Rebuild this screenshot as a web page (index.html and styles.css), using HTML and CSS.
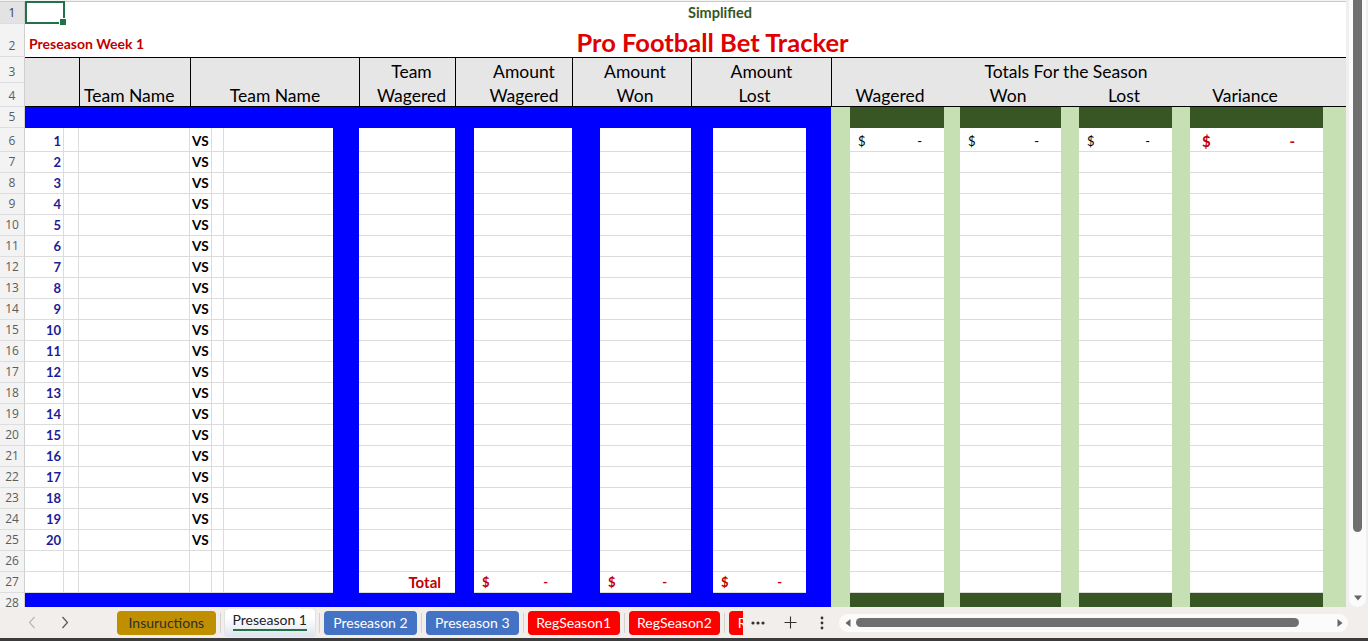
FILE: index.html
```html
<!DOCTYPE html>
<html lang="en">
<head>
<meta charset="utf-8">
<title>Pro Football Bet Tracker</title>
<link rel="stylesheet" href="styles.css">
</head>
<body>
<div class="app">
  <div class="sheet">
    <div class="colhead"></div>

    <div class="row r1">
      <span class="rh rh-sel">1</span>
      <span class="a1"></span>
      <span class="subtitle">Simplified</span>
    </div>

    <div class="row r2">
      <span class="rh">2</span>
      <span class="week">Preseason Week 1</span>
      <span class="title">Pro Football Bet Tracker</span>
    </div>

    <div class="row hdr">
      <span class="rh h3">3</span>
      <span class="rh h4">4</span>
      <div class="hc hc-ab"><span></span><span></span></div>
      <div class="hc hc-c"><span></span><span>Team Name</span></div>
      <div class="hc hc-dg"><span></span><span>Team Name</span></div>
      <div class="hc hc-h"><span>Team</span><span>Wagered</span></div>
      <div class="hc hc-ij"><span>Amount</span><span>Wagered</span></div>
      <div class="hc hc-kl"><span>Amount</span><span>Won</span></div>
      <div class="hc hc-mo"><span>Amount</span><span class="lost">Lost</span></div>
      <div class="hc hc-tot">
        <span class="tot-title">Totals For the Season</span>
        <span class="tot-sub"><em>Wagered</em><em>Won</em><em>Lost</em><em>Variance</em><em></em></span>
      </div>
    </div>

    <div class="row band">
      <span class="rh">5</span><span class="blueband"></span>
      <span class="l"></span><span class="dg"></span><span class="l"></span><span class="dg"></span><span class="l"></span><span class="dg"></span><span class="l"></span><span class="dg"></span><span class="l"></span>
    </div>

    <div class="row d first"><span class="rh">6</span><span class="gv n">1</span><span class="gv"></span><span class="gv"></span><span class="gv vs">VS</span><span class="gv"></span><span class="g"></span><span class="b"></span><span class="g"></span><span class="b"></span><span class="g"></span><span class="b"></span><span class="g"></span><span class="b"></span><span class="g"></span><span class="b"></span><span class="l"></span><span class="g acct"><span>$</span><span>-</span></span><span class="l"></span><span class="g acct"><span>$</span><span>-</span></span><span class="l"></span><span class="g acct"><span>$</span><span>-</span></span><span class="l"></span><span class="g acct var"><span>$</span><span>-</span></span><span class="l"></span></div>
    <div class="row d"><span class="rh">7</span><span class="gv n">2</span><span class="gv"></span><span class="gv"></span><span class="gv vs">VS</span><span class="gv"></span><span class="g"></span><span class="b"></span><span class="g"></span><span class="b"></span><span class="g"></span><span class="b"></span><span class="g"></span><span class="b"></span><span class="g"></span><span class="b"></span><span class="l"></span><span class="g"></span><span class="l"></span><span class="g"></span><span class="l"></span><span class="g"></span><span class="l"></span><span class="g"></span><span class="l"></span></div>
    <div class="row d"><span class="rh">8</span><span class="gv n">3</span><span class="gv"></span><span class="gv"></span><span class="gv vs">VS</span><span class="gv"></span><span class="g"></span><span class="b"></span><span class="g"></span><span class="b"></span><span class="g"></span><span class="b"></span><span class="g"></span><span class="b"></span><span class="g"></span><span class="b"></span><span class="l"></span><span class="g"></span><span class="l"></span><span class="g"></span><span class="l"></span><span class="g"></span><span class="l"></span><span class="g"></span><span class="l"></span></div>
    <div class="row d"><span class="rh">9</span><span class="gv n">4</span><span class="gv"></span><span class="gv"></span><span class="gv vs">VS</span><span class="gv"></span><span class="g"></span><span class="b"></span><span class="g"></span><span class="b"></span><span class="g"></span><span class="b"></span><span class="g"></span><span class="b"></span><span class="g"></span><span class="b"></span><span class="l"></span><span class="g"></span><span class="l"></span><span class="g"></span><span class="l"></span><span class="g"></span><span class="l"></span><span class="g"></span><span class="l"></span></div>
    <div class="row d"><span class="rh">10</span><span class="gv n">5</span><span class="gv"></span><span class="gv"></span><span class="gv vs">VS</span><span class="gv"></span><span class="g"></span><span class="b"></span><span class="g"></span><span class="b"></span><span class="g"></span><span class="b"></span><span class="g"></span><span class="b"></span><span class="g"></span><span class="b"></span><span class="l"></span><span class="g"></span><span class="l"></span><span class="g"></span><span class="l"></span><span class="g"></span><span class="l"></span><span class="g"></span><span class="l"></span></div>
    <div class="row d"><span class="rh">11</span><span class="gv n">6</span><span class="gv"></span><span class="gv"></span><span class="gv vs">VS</span><span class="gv"></span><span class="g"></span><span class="b"></span><span class="g"></span><span class="b"></span><span class="g"></span><span class="b"></span><span class="g"></span><span class="b"></span><span class="g"></span><span class="b"></span><span class="l"></span><span class="g"></span><span class="l"></span><span class="g"></span><span class="l"></span><span class="g"></span><span class="l"></span><span class="g"></span><span class="l"></span></div>
    <div class="row d"><span class="rh">12</span><span class="gv n">7</span><span class="gv"></span><span class="gv"></span><span class="gv vs">VS</span><span class="gv"></span><span class="g"></span><span class="b"></span><span class="g"></span><span class="b"></span><span class="g"></span><span class="b"></span><span class="g"></span><span class="b"></span><span class="g"></span><span class="b"></span><span class="l"></span><span class="g"></span><span class="l"></span><span class="g"></span><span class="l"></span><span class="g"></span><span class="l"></span><span class="g"></span><span class="l"></span></div>
    <div class="row d"><span class="rh">13</span><span class="gv n">8</span><span class="gv"></span><span class="gv"></span><span class="gv vs">VS</span><span class="gv"></span><span class="g"></span><span class="b"></span><span class="g"></span><span class="b"></span><span class="g"></span><span class="b"></span><span class="g"></span><span class="b"></span><span class="g"></span><span class="b"></span><span class="l"></span><span class="g"></span><span class="l"></span><span class="g"></span><span class="l"></span><span class="g"></span><span class="l"></span><span class="g"></span><span class="l"></span></div>
    <div class="row d"><span class="rh">14</span><span class="gv n">9</span><span class="gv"></span><span class="gv"></span><span class="gv vs">VS</span><span class="gv"></span><span class="g"></span><span class="b"></span><span class="g"></span><span class="b"></span><span class="g"></span><span class="b"></span><span class="g"></span><span class="b"></span><span class="g"></span><span class="b"></span><span class="l"></span><span class="g"></span><span class="l"></span><span class="g"></span><span class="l"></span><span class="g"></span><span class="l"></span><span class="g"></span><span class="l"></span></div>
    <div class="row d"><span class="rh">15</span><span class="gv n">10</span><span class="gv"></span><span class="gv"></span><span class="gv vs">VS</span><span class="gv"></span><span class="g"></span><span class="b"></span><span class="g"></span><span class="b"></span><span class="g"></span><span class="b"></span><span class="g"></span><span class="b"></span><span class="g"></span><span class="b"></span><span class="l"></span><span class="g"></span><span class="l"></span><span class="g"></span><span class="l"></span><span class="g"></span><span class="l"></span><span class="g"></span><span class="l"></span></div>
    <div class="row d"><span class="rh">16</span><span class="gv n">11</span><span class="gv"></span><span class="gv"></span><span class="gv vs">VS</span><span class="gv"></span><span class="g"></span><span class="b"></span><span class="g"></span><span class="b"></span><span class="g"></span><span class="b"></span><span class="g"></span><span class="b"></span><span class="g"></span><span class="b"></span><span class="l"></span><span class="g"></span><span class="l"></span><span class="g"></span><span class="l"></span><span class="g"></span><span class="l"></span><span class="g"></span><span class="l"></span></div>
    <div class="row d"><span class="rh">17</span><span class="gv n">12</span><span class="gv"></span><span class="gv"></span><span class="gv vs">VS</span><span class="gv"></span><span class="g"></span><span class="b"></span><span class="g"></span><span class="b"></span><span class="g"></span><span class="b"></span><span class="g"></span><span class="b"></span><span class="g"></span><span class="b"></span><span class="l"></span><span class="g"></span><span class="l"></span><span class="g"></span><span class="l"></span><span class="g"></span><span class="l"></span><span class="g"></span><span class="l"></span></div>
    <div class="row d"><span class="rh">18</span><span class="gv n">13</span><span class="gv"></span><span class="gv"></span><span class="gv vs">VS</span><span class="gv"></span><span class="g"></span><span class="b"></span><span class="g"></span><span class="b"></span><span class="g"></span><span class="b"></span><span class="g"></span><span class="b"></span><span class="g"></span><span class="b"></span><span class="l"></span><span class="g"></span><span class="l"></span><span class="g"></span><span class="l"></span><span class="g"></span><span class="l"></span><span class="g"></span><span class="l"></span></div>
    <div class="row d"><span class="rh">19</span><span class="gv n">14</span><span class="gv"></span><span class="gv"></span><span class="gv vs">VS</span><span class="gv"></span><span class="g"></span><span class="b"></span><span class="g"></span><span class="b"></span><span class="g"></span><span class="b"></span><span class="g"></span><span class="b"></span><span class="g"></span><span class="b"></span><span class="l"></span><span class="g"></span><span class="l"></span><span class="g"></span><span class="l"></span><span class="g"></span><span class="l"></span><span class="g"></span><span class="l"></span></div>
    <div class="row d"><span class="rh">20</span><span class="gv n">15</span><span class="gv"></span><span class="gv"></span><span class="gv vs">VS</span><span class="gv"></span><span class="g"></span><span class="b"></span><span class="g"></span><span class="b"></span><span class="g"></span><span class="b"></span><span class="g"></span><span class="b"></span><span class="g"></span><span class="b"></span><span class="l"></span><span class="g"></span><span class="l"></span><span class="g"></span><span class="l"></span><span class="g"></span><span class="l"></span><span class="g"></span><span class="l"></span></div>
    <div class="row d"><span class="rh">21</span><span class="gv n">16</span><span class="gv"></span><span class="gv"></span><span class="gv vs">VS</span><span class="gv"></span><span class="g"></span><span class="b"></span><span class="g"></span><span class="b"></span><span class="g"></span><span class="b"></span><span class="g"></span><span class="b"></span><span class="g"></span><span class="b"></span><span class="l"></span><span class="g"></span><span class="l"></span><span class="g"></span><span class="l"></span><span class="g"></span><span class="l"></span><span class="g"></span><span class="l"></span></div>
    <div class="row d"><span class="rh">22</span><span class="gv n">17</span><span class="gv"></span><span class="gv"></span><span class="gv vs">VS</span><span class="gv"></span><span class="g"></span><span class="b"></span><span class="g"></span><span class="b"></span><span class="g"></span><span class="b"></span><span class="g"></span><span class="b"></span><span class="g"></span><span class="b"></span><span class="l"></span><span class="g"></span><span class="l"></span><span class="g"></span><span class="l"></span><span class="g"></span><span class="l"></span><span class="g"></span><span class="l"></span></div>
    <div class="row d"><span class="rh">23</span><span class="gv n">18</span><span class="gv"></span><span class="gv"></span><span class="gv vs">VS</span><span class="gv"></span><span class="g"></span><span class="b"></span><span class="g"></span><span class="b"></span><span class="g"></span><span class="b"></span><span class="g"></span><span class="b"></span><span class="g"></span><span class="b"></span><span class="l"></span><span class="g"></span><span class="l"></span><span class="g"></span><span class="l"></span><span class="g"></span><span class="l"></span><span class="g"></span><span class="l"></span></div>
    <div class="row d"><span class="rh">24</span><span class="gv n">19</span><span class="gv"></span><span class="gv"></span><span class="gv vs">VS</span><span class="gv"></span><span class="g"></span><span class="b"></span><span class="g"></span><span class="b"></span><span class="g"></span><span class="b"></span><span class="g"></span><span class="b"></span><span class="g"></span><span class="b"></span><span class="l"></span><span class="g"></span><span class="l"></span><span class="g"></span><span class="l"></span><span class="g"></span><span class="l"></span><span class="g"></span><span class="l"></span></div>
    <div class="row d"><span class="rh">25</span><span class="gv n">20</span><span class="gv"></span><span class="gv"></span><span class="gv vs">VS</span><span class="gv"></span><span class="g"></span><span class="b"></span><span class="g"></span><span class="b"></span><span class="g"></span><span class="b"></span><span class="g"></span><span class="b"></span><span class="g"></span><span class="b"></span><span class="l"></span><span class="g"></span><span class="l"></span><span class="g"></span><span class="l"></span><span class="g"></span><span class="l"></span><span class="g"></span><span class="l"></span></div>
    <div class="row d"><span class="rh">26</span><span class="gv"></span><span class="gv"></span><span class="gv"></span><span class="gv"></span><span class="gv"></span><span class="g"></span><span class="b"></span><span class="g"></span><span class="b"></span><span class="g"></span><span class="b"></span><span class="g"></span><span class="b"></span><span class="g"></span><span class="b"></span><span class="l"></span><span class="g"></span><span class="l"></span><span class="g"></span><span class="l"></span><span class="g"></span><span class="l"></span><span class="g"></span><span class="l"></span></div>
    <div class="row d"><span class="rh">27</span><span class="gv"></span><span class="gv"></span><span class="gv"></span><span class="gv"></span><span class="gv"></span><span class="g"></span><span class="b"></span><span class="g total">Total</span><span class="b"></span><span class="g acct sum"><span>$</span><span>-</span></span><span class="b"></span><span class="g acct sum"><span>$</span><span>-</span></span><span class="b"></span><span class="g acct sum"><span>$</span><span>-</span></span><span class="b"></span><span class="l"></span><span class="g"></span><span class="l"></span><span class="g"></span><span class="l"></span><span class="g"></span><span class="l"></span><span class="g"></span><span class="l"></span></div>

    <div class="row band">
      <span class="rh">28</span><span class="blueband"></span>
      <span class="l"></span><span class="dg"></span><span class="l"></span><span class="dg"></span><span class="l"></span><span class="dg"></span><span class="l"></span><span class="dg"></span><span class="l"></span>
    </div>
  </div>

  <div class="vscroll">
    <div class="vtrack">
      <div class="vthumb"></div>
      <svg class="varrow" width="10" height="8" viewBox="0 0 10 8"><path d="M1 1.5 H9 L5 6.5 Z" fill="#666"/></svg>
    </div>
  </div>

  <div class="tabbar">
    <div class="nav">
      <svg width="8" height="13" viewBox="0 0 8 13"><path d="M6.5 1 L1.5 6.5 L6.5 12" fill="none" stroke="#b8b8b8" stroke-width="1.2"/></svg>
      <svg width="8" height="13" viewBox="0 0 8 13"><path d="M1.5 1 L6.5 6.5 L1.5 12" fill="none" stroke="#555" stroke-width="1.2"/></svg>
    </div>
    <div class="tabs">
      <span class="tab t-gold">Insuructions</span><i class="sep"></i>
      <span class="tab active"><span>Preseason 1</span></span><i class="sep"></i>
      <span class="tab t-blue">Preseason 2</span><i class="sep"></i>
      <span class="tab t-blue">Preseason 3</span><i class="sep"></i>
      <span class="tab t-red">RegSeason1</span><i class="sep"></i>
      <span class="tab t-red">RegSeason2</span><i class="sep"></i>
      <span class="tab t-red">RegSeason3</span>
    </div>
    <div class="tools">
      <span class="tool"><svg width="14" height="4" viewBox="0 0 14 4"><circle cx="2" cy="2" r="1.6" fill="#333"/><circle cx="7" cy="2" r="1.6" fill="#333"/><circle cx="12" cy="2" r="1.6" fill="#333"/></svg></span>
      <span class="tool"><svg width="13" height="13" viewBox="0 0 13 13"><path d="M6.5 0.5 V12.5 M0.5 6.5 H12.5" stroke="#333" stroke-width="1.1"/></svg></span>
      <span class="tool"><svg width="4" height="14" viewBox="0 0 4 14"><circle cx="2" cy="2" r="1.4" fill="#333"/><circle cx="2" cy="7" r="1.4" fill="#333"/><circle cx="2" cy="12" r="1.4" fill="#333"/></svg></span>
    </div>
    <div class="hscroll">
      <svg width="8" height="10" viewBox="0 0 8 10"><path d="M6.5 1 V9 L1.5 5 Z" fill="#666"/></svg>
      <div class="hthumb"></div>
      <svg width="8" height="10" viewBox="0 0 8 10"><path d="M1.5 1 V9 L6.5 5 Z" fill="#666"/></svg>
    </div>
  </div>
</div>
</body>
</html>
```

FILE: styles.css
```css
:root {
  --cols: 25px 39px 15px 111px 22px 12px 109px 26px 96px 19px 98px 28px 91px 22px 93px 25px 19px 94px 16px 101px 18px 93px 18px 133px 23px;
  --grid: #dcdcdc;
  --blue: #0000ff;
  --lg: #c6e0b4;
  --dg: #375623;
  --red: #c00000;
  --hdr: #e7e6e6;
}

* { box-sizing: border-box; margin: 0; padding: 0; }

html, body {
  width: 1368px;
  height: 641px;
  overflow: hidden;
  background: #fff;
}

body {
  font-family: Lato, "Open Sans", sans-serif;
  color: #000;
}

.app {
  display: grid;
  grid-template-columns: 1346px 22px;
  grid-template-rows: 607px 34px;
  width: 1368px;
  height: 641px;
}

/* ---------- sheet ---------- */
.sheet {
  overflow: hidden;
  display: flex;
  flex-direction: column;
  background: #fff;
}

.colhead {
  height: 2px;
  flex: none;
  background: #f3f3f3;
  border-bottom: 1px solid #c9c9c9;
}

.row {
  display: grid;
  grid-template-columns: var(--cols);
  flex: none;
}

.rh {
  grid-column: 1;
  background: #f3f3f3;
  border-right: 1px solid #cfcfcf;
  border-bottom: 1px solid #dedede;
  color: #5c5c5c;
  font-family: "Open Sans", sans-serif;
  font-size: 12px;
  line-height: 14px;
  display: flex;
  align-items: flex-end;
  justify-content: center;
  padding-bottom: 3px;
}

/* row 1 */
.r1 { height: 22px; }
.rh-sel { background: #e3e3e3; color: #3c3c3c; }
.a1 {
  grid-column: 2;
  position: relative;
  border: 2px solid #217346;
  margin-top: -1px;
  margin-right: -1px;
}
.a1::after {
  content: "";
  position: absolute;
  right: -4px;
  bottom: -4px;
  width: 6px;
  height: 6px;
  background: #217346;
  border: 1px solid #fff;
}
.subtitle {
  grid-column: 5 / -1;
  padding-right: 96px;
  text-align: center;
  align-self: end;
  font-weight: 700;
  font-size: 14.5px;
  line-height: 16px;
  padding-bottom: 3px;
  color: #375623;
}

/* row 2 */
.r2 { height: 33px; }
.week {
  grid-column: 2 / 8;
  grid-row: 1;
  align-self: end;
  padding-left: 4px;
  padding-bottom: 5px;
  font-weight: 700;
  font-size: 14px;
  line-height: 16px;
  color: var(--red);
  white-space: nowrap;
}
.title {
  grid-column: 5 / -1;
  grid-row: 1;
  align-self: end;
  padding-right: 111px;
  text-align: center;
  font-weight: 700;
  font-size: 25.5px;
  line-height: 27px;
  padding-bottom: 1px;
  color: #e00000;
  white-space: nowrap;
}

/* header rows 3-4 */
.hdr {
  grid-template-rows: 26px 24px;
  height: 50px;
}
.h3 { grid-row: 1; }
.h4 { grid-row: 2; }
.hc {
  grid-row: 1 / 3;
  display: flex;
  flex-direction: column;
  background: var(--hdr);
  border-top: 1px solid #000;
  border-bottom: 1px solid #000;
  font-size: 17.5px;
  line-height: 18px;
  white-space: nowrap;
}
.hc > span {
  display: flex;
  align-items: flex-end;
  justify-content: center;
}
.hc > span:first-child { height: 25px; padding-bottom: 2px; }
.hc > span:last-child { height: 23px; padding-bottom: 1px; }

.hc-ab { grid-column: 2 / 4; }
.hc-c { grid-column: 4 / 5; border-left: 1px solid #000; }
.hc-c > span { justify-content: flex-start; padding-left: 4px; }
.hc-dg { grid-column: 5 / 9; border-left: 1px solid #000; }
.hc-h { grid-column: 9 / 10; border-left: 1px solid #000; padding-left: 8px; }
.hc-ij { grid-column: 10 / 12; border-left: 1px solid #000; padding-left: 20px; }
.hc-kl { grid-column: 12 / 14; border-left: 1px solid #000; padding-left: 6px; }
.hc-mo { grid-column: 14 / 17; border-left: 1px solid #000; }
.hc-mo .lost { padding-right: 14px; }
.hc-tot { grid-column: 17 / -1; border-left: 1px solid #000; }
.hc-tot .tot-title { padding-right: 46px; }
.hc-tot .tot-sub {
  display: grid;
  grid-template-columns: 116px 120px 112px 130px 1fr;
  align-items: end;
}
.tot-sub em { font-style: normal; text-align: center; }

/* blue / green bands (rows 5 and 28) */
.band { height: 21px; }
.blueband { grid-column: 2 / 17; background: var(--blue); }
.dg { background: var(--dg); }
.l { background: var(--lg); }
.b { background: var(--blue); }

/* data rows */
.d { height: 21px; }
.d.first { height: 24px; }

.g, .gv {
  border-bottom: 1px solid var(--grid);
  display: flex;
  align-items: flex-end;
  padding-bottom: 2px;
  font-size: 13px;
  line-height: 15px;
  white-space: nowrap;
}
.gv { border-right: 1px solid var(--grid); }

.n {
  justify-content: flex-end;
  padding-right: 2px;
  font-weight: 700;
  color: #1c1c96;
}
.vs {
  padding-left: 2px;
  font-weight: 700;
  font-size: 13.5px;
}

.acct {
  justify-content: space-between;
  padding-left: 8px;
  padding-right: 22px;
}
.acct.var {
  padding-left: 12px;
  padding-right: 28px;
  color: var(--red);
  font-weight: 700;
  font-size: 15px;
}
.acct.sum {
  color: var(--red);
  font-weight: 700;
  padding-right: 24px;
}
.total {
  justify-content: flex-end;
  padding-right: 14px;
  font-weight: 700;
  font-size: 15px;
  color: var(--red);
}

/* ---------- vertical scrollbar ---------- */
.vscroll {
  background: #f1efed;
  padding: 0 2px 0 3px;
}
.vtrack {
  height: 100%;
  background: #fbfbfb;
  border-radius: 0 0 9px 9px;
  display: flex;
  flex-direction: column;
  align-items: center;
  padding-bottom: 3px;
}
.vthumb {
  width: 9px;
  height: 532px;
  background: #6f6f6f;
  border-radius: 0 0 5px 5px;
}
.varrow { margin-top: auto; margin-bottom: 2px; }

/* ---------- tab bar ---------- */
.tabbar {
  grid-column: 1 / -1;
  display: flex;
  align-items: center;
  background: #f1eeec;
  border-bottom: 3px solid #3b3b3b;
  font-family: Lato, "Open Sans", sans-serif;
  font-size: 14px;
}
.nav {
  width: 117px;
  flex: none;
  display: flex;
  align-items: center;
  gap: 25px;
  padding-left: 28px;
}
.tabs {
  width: 626px;
  flex: none;
  display: flex;
  align-items: center;
  overflow: hidden;
}
.tab {
  flex: none;
  height: 24px;
  padding: 0 9px;
  display: flex;
  align-items: center;
  border-radius: 4px;
  color: #fff;
  white-space: nowrap;
}
.t-gold { background: #bf8f00; color: #2e2e2e; padding: 0 11.5px; }
.t-blue { background: #4472c4; padding: 0 9.25px; }
.t-red { background: #ff0000; padding: 0 8.5px; }
.tab.active {
  height: 28px;
  padding: 0 8px;
  background: linear-gradient(#ffffff 30%, #dde4ee);
  box-shadow: 0 0 0 1px #e2e2e2;
  color: #222;
  align-items: flex-start;
  padding-top: 2px;
}
.tab.active span {
  border-bottom: 2px solid #217346;
  padding-bottom: 1px;
  line-height: 17px;
}
.sep {
  flex: none;
  width: 1px;
  height: 20px;
  margin: 0 4px;
  background: #d3d0ce;
}
.tools {
  width: 96px;
  flex: none;
  display: flex;
  margin-left: -1px;
}
.tool {
  width: 32px;
  display: flex;
  align-items: center;
  justify-content: center;
}
.hscroll {
  width: 509px;
  flex: none;
  height: 18px;
  margin-left: 1px;
  background: #fbfbfb;
  border-radius: 9px;
  display: flex;
  align-items: center;
  padding: 0 4px 0 5px;
  gap: 4px;
}
.hthumb {
  width: 443px;
  height: 9px;
  border-radius: 5px;
  background: #6f6f6f;
  margin-right: auto;
}
```
